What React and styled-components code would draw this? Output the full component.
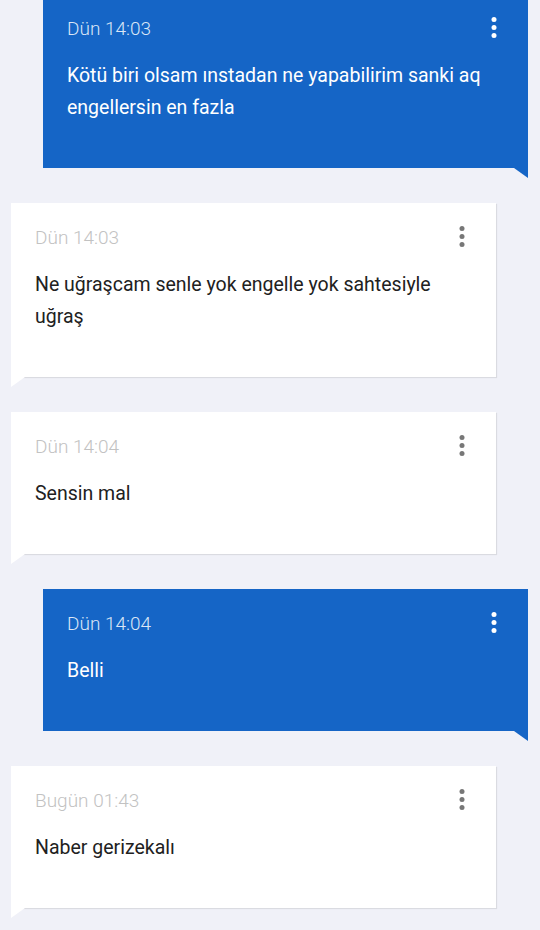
import React from 'react';
import styled, { createGlobalStyle } from 'styled-components';

const GlobalStyle = createGlobalStyle`
  html, body {
    margin: 0;
    padding: 0;
    background-color: #f0f1f8;
  }
  body {
    font-family: Roboto, "Noto Sans", sans-serif;
  }
`;

const Feed = styled.div`
  display: flex;
  flex-direction: column;
  gap: 35px;
  margin-top: -6px;
  padding: 0 12px 40px 11px;
`;

const Bubble = styled.div`
  position: relative;
  width: 485px;
  box-sizing: border-box;
  align-self: ${({ mine }) => (mine ? 'flex-end' : 'flex-start')};
  background-color: ${({ mine }) => (mine ? '#1565c6' : '#ffffff')};
  box-shadow: ${({ mine }) => (mine ? 'none' : '1px 1px 1px rgba(0, 0, 0, 0.09)')};
  padding: 22px 31px 44px 24px;

  &::after {
    content: '';
    position: absolute;
    bottom: -10px;
    width: 14px;
    height: 10px;
    background-color: ${({ mine }) => (mine ? '#1565c6' : '#ffffff')};
    ${({ mine }) =>
      mine
        ? 'right: 0; clip-path: polygon(0 0, 100% 0, 100% 100%);'
        : 'left: 0; clip-path: polygon(0 0, 100% 0, 0 100%);'}
  }
`;

const Header = styled.div`
  display: flex;
  justify-content: space-between;
  align-items: center;
`;

const Time = styled.span`
  font-size: 19px;
  font-weight: 300;
  line-height: 26px;
  color: ${({ mine }) => (mine ? '#dbe6f6' : '#c2c2c2')};
`;

const Dots = styled.svg`
  width: 6px;
  height: 21px;
  margin-top: -3px;
  fill: ${({ mine }) => (mine ? '#ffffff' : '#777777')};
`;

const Text = styled.p`
  margin: 18px 0 0;
  font-size: 19.5px;
  line-height: 32px;
  color: ${({ mine }) => (mine ? '#ffffff' : '#212121')};
`;

const messages = [
  { mine: true, time: 'Dün 14:03', text: 'Kötü biri olsam ınstadan ne yapabilirim sanki aq engellersin en fazla' },
  { mine: false, time: 'Dün 14:03', text: 'Ne uğraşcam senle yok engelle yok sahtesiyle uğraş' },
  { mine: false, time: 'Dün 14:04', text: 'Sensin mal' },
  { mine: true, time: 'Dün 14:04', text: 'Belli' },
  { mine: false, time: 'Bugün 01:43', text: 'Naber gerizekalı' },
];

const Message = ({ mine, time, text }) => (
  <Bubble mine={mine}>
    <Header>
      <Time mine={mine}>{time}</Time>
      <Dots mine={mine} viewBox="0 0 6 21">
        <circle cx="3" cy="2.5" r="2.5" />
        <circle cx="3" cy="10.5" r="2.5" />
        <circle cx="3" cy="18.5" r="2.5" />
      </Dots>
    </Header>
    <Text mine={mine}>{text}</Text>
  </Bubble>
);

const App = () => (
  <>
    <GlobalStyle />
    <Feed>
      {messages.map((m, i) => (
        <Message key={i} {...m} />
      ))}
    </Feed>
  </>
);

export default App;
